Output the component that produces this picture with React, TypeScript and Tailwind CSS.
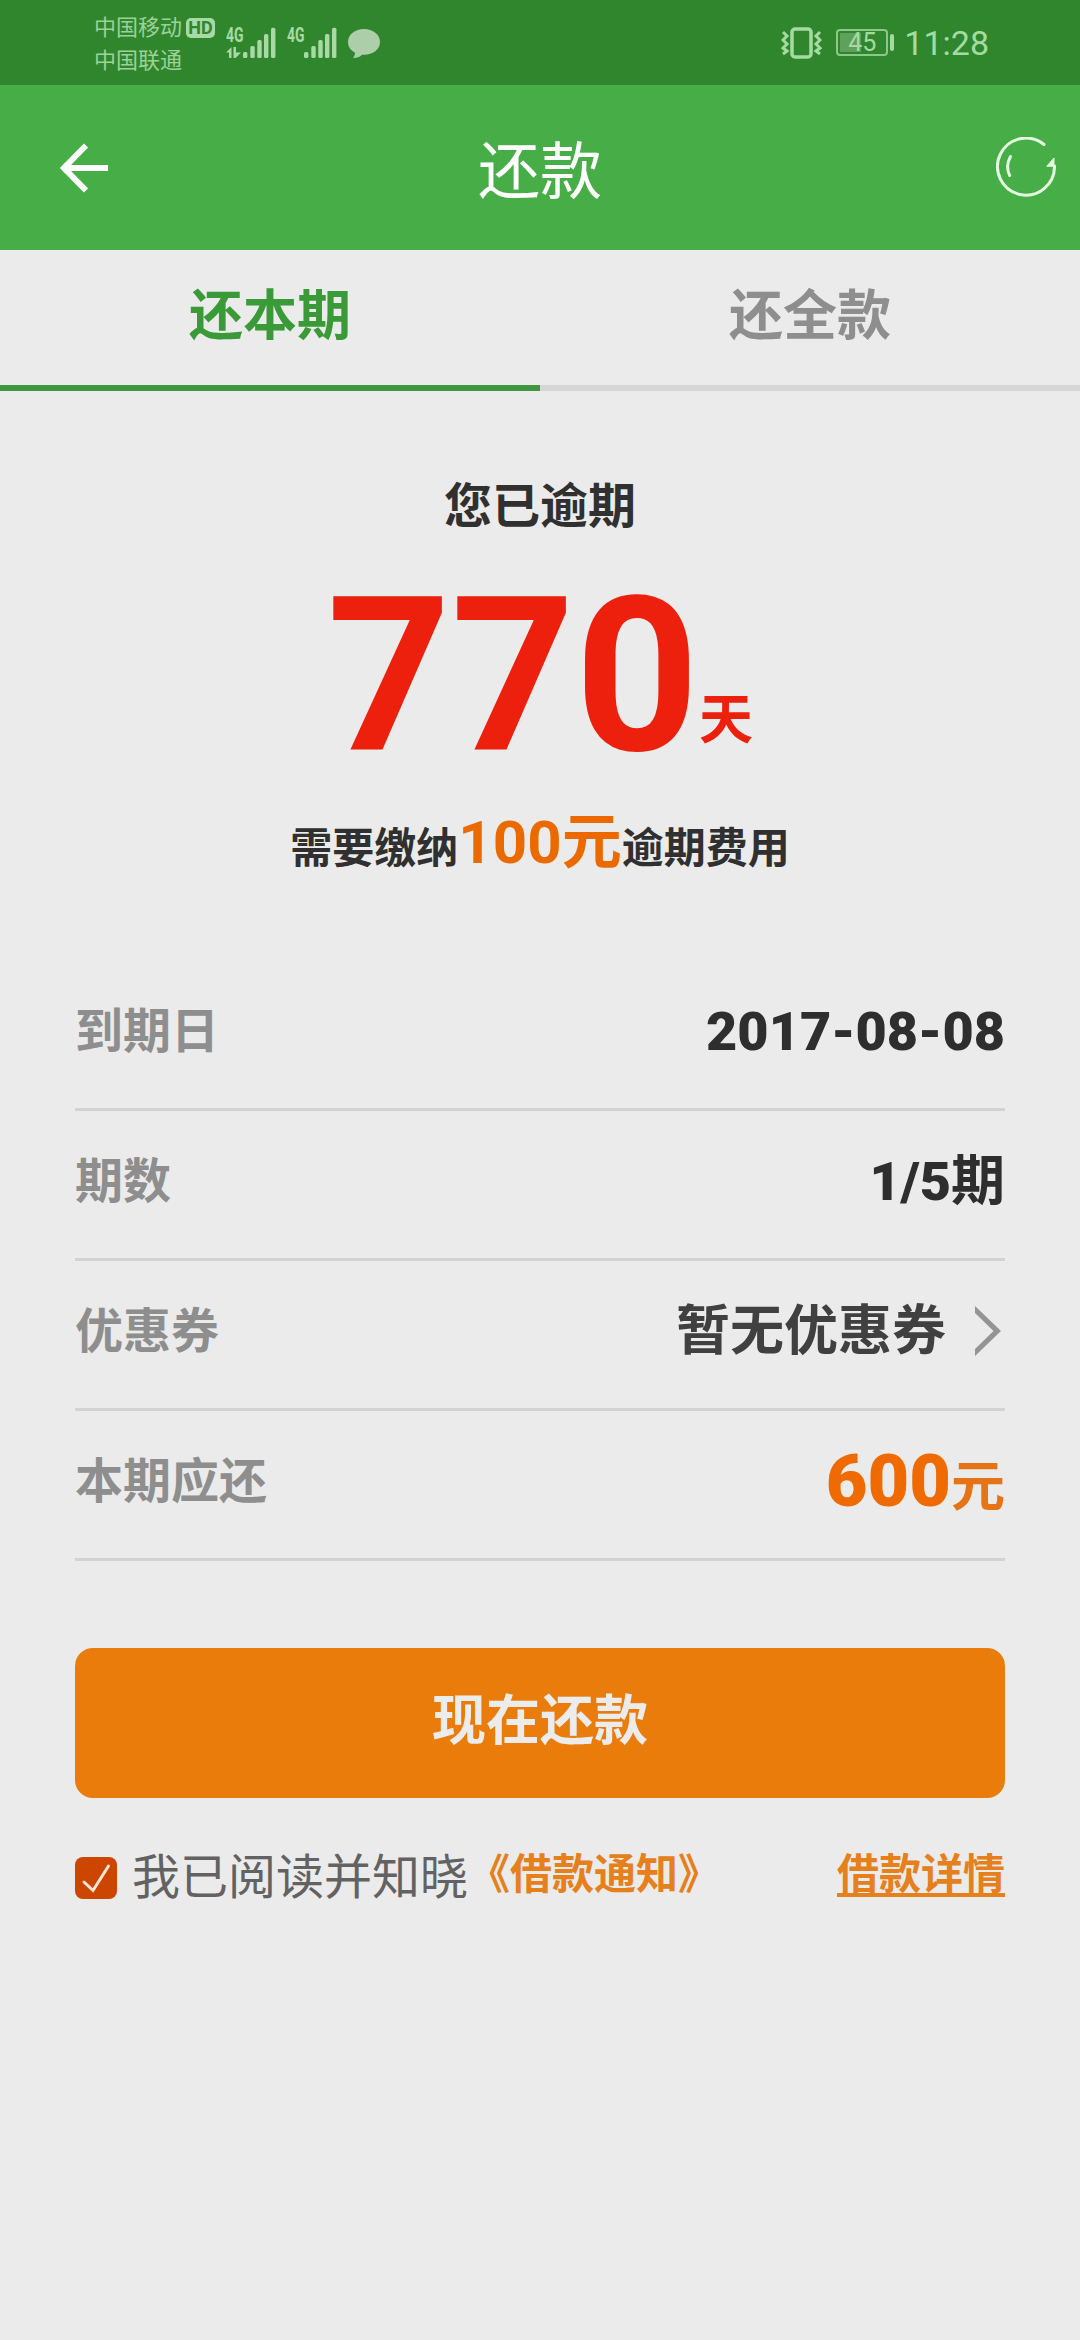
import React, { ReactNode } from 'react'

interface RowProps {
  label: string
  children: ReactNode
}

const Row: React.FC<RowProps> = ({ label, children }) => (
  <div className="flex h-[150px] items-center justify-between border-b-[3px] border-[#d2d2d2] pb-[6px]">
    <span className="text-[48px] leading-none font-bold text-[#8e8e8e]">{label}</span>
    {children}
  </div>
)

const SignalIcon = ({ data = false }: { data?: boolean }) => (
  <svg className="h-[44px] w-[50px]" viewBox="0 -6 50 44" fill="#a9d9a6">
    <text
      x="0"
      y="14.500"
      fontSize="20.500"
      fontWeight="700"
      fontFamily="Roboto"
      textLength="17.500"
      lengthAdjust="spacingAndGlyphs"
    >
      4G
    </text>
    {data && <path d="M0 25.500l5.500-5.500v11H3v-5.500zM7.500 20h2.500v5.500h5L9.500 31h-2z" />}
    <rect x="17" y="25" width="4.400" height="6" rx="1.500" />
    <rect x="24.300" y="19" width="4.400" height="12" rx="1.500" />
    <rect x="31.300" y="13" width="4.400" height="18" rx="1.500" />
    <rect x="38" y="7" width="4.400" height="24" rx="1.500" />
    <rect x="45" y="0.800" width="4.400" height="30.200" rx="1.500" />
  </svg>
)

const StatusBar = () => (
  <div className="flex h-[85px] items-center justify-between bg-[#2f862c] pr-[91px] pl-[94px] text-[#a5dba1]">
    <div className="flex items-center">
      <div className="w-[92px] pt-[2px] text-[22px] leading-[33px] font-normal text-[#9cd198]">
        <div>中国移动</div>
        <div>中国联通</div>
      </div>
      <div className="mb-[30px] flex h-[20px] w-[29px] items-center justify-center rounded-[5px] bg-[#a9d9a6] text-[18px] leading-[20px] font-bold text-[#2f862c]">
        HD
      </div>
      <div className="ml-[11px] flex items-center gap-[11px]">
        <SignalIcon data />
        <SignalIcon />
        <svg className="h-[32px] w-[32px]" viewBox="0 0 32 32" fill="#accfa9">
          <path d="M16 2C7 2 0 7.500 0 15c0 5 3 8.500 7 10.700 0 2-.8 3.800-2 5.300 4 0 7-1.200 9-3.300 10 .8 18-4.700 18-12.700C32 7.500 25 2 16 2z" />
        </svg>
      </div>
    </div>
    <div className="flex items-center">
      <svg className="h-[34px] w-[41px]" viewBox="0 0 41 34" fill="none" stroke="#a5dba1" strokeWidth="3">
        <rect x="11" y="3" width="19" height="28" rx="3" strokeWidth="3.500" />
        <path d="M2 6l4 4-4 4 4 4-4 4 4 3-4 3M39 6l-4 4 4 4-4 4 4 4-4 3 4 3" />
      </svg>
      <div className="ml-[14px] flex items-center gap-[2px]">
        <div className="relative flex h-[27px] w-[52px] items-center justify-center rounded-[4px] border-2 border-[#8cc889]">
          <div className="absolute top-[2px] left-[2px] h-[19px] w-[21px] bg-[#5fa15c]" />
          <span className="relative text-[25px] leading-none">45</span>
        </div>
        <div className="h-[17px] w-[4px] rounded-[2px] bg-[#a5dba1]" />
      </div>
      <span className="ml-[10px] text-[34px] leading-none">11:28</span>
    </div>
  </div>
)

const Header = () => (
  <header className="grid h-[165px] grid-cols-3 items-center bg-[#47ae47] pr-[24px] pl-[60px]">
    <svg className="h-[50px] w-[50px]" viewBox="0 0 50 50" fill="none" stroke="#fff" strokeWidth="6">
      <path d="M48 25H4M26 2.500L4 25l22 22.500" />
    </svg>
    <h1 className="-ml-[36px] pt-[10px] text-center text-[62px] leading-none font-normal text-white">还款</h1>
    <svg
      className="mb-[2px] h-[60px] w-[60px] justify-self-end"
      viewBox="0 0 60 60"
      fill="none"
      stroke="#e4fbe2"
      strokeWidth="3"
      strokeLinecap="round"
    >
      <path d="M48 7.500A28.500 28.500 0 1 0 58.500 29" />
      <path d="M14.500 19.500q-5.500 10-.8 19" />
      <path d="M51 29l7-8v8z" fill="#e4fbe2" strokeWidth="1" />
    </svg>
  </header>
)

export default function App() {
  return (
    <div className="min-h-[2340px] w-[1080px] bg-[#ebebeb] font-['Roboto','Noto_Sans_CJK_SC',sans-serif]">
      <StatusBar />
      <Header />

      <div className="grid h-[141px] grid-cols-2 text-center text-[54px] leading-[133px] font-bold">
        <div className="border-b-[6px] border-[#3f963d] text-[#3a9a38]">还本期</div>
        <div className="border-b-[6px] border-[#d6d6d6] text-[#8e8e8e]">还全款</div>
      </div>

      <section className="pt-[86px] text-center font-bold text-[#303030]">
        <p className="text-[48px] leading-[60px]">您已逾期</p>
        <p className="mt-[32px] text-[216px] leading-[216px] text-[#ed200d]">
          770<span className="align-[11px] text-[54px] leading-none">天</span>
        </p>
        <p className="mt-[24px] text-[42px] leading-[80px]">
          需要缴纳<span className="text-[60px] leading-none text-[#eb6a00]">100元</span>逾期费用
        </p>
      </section>

      <main className="mt-[72px] px-[75px]">
        <Row label="到期日">
          <span className="text-[54px] leading-none font-black text-[#2e2e2e]">2017-08-08</span>
        </Row>
        <Row label="期数">
          <span className="text-[54px] leading-none font-black text-[#2e2e2e]">
            1/5<span className="font-bold">期</span>
          </span>
        </Row>
        <Row label="优惠券">
          <span className="flex items-center gap-[29px] text-[54px] leading-none font-bold text-[#404040]">
            暂无优惠券
            <svg className="mr-[4px] mb-[2px] h-[50px] w-[26px]" viewBox="0 0 26 50" fill="#949494">
              <path d="M0 0l26 25L0 50v-7l18.500-18L0 7z" />
            </svg>
          </span>
        </Row>
        <Row label="本期应还">
          <span className="text-[72px] leading-none font-black text-[#ef6a00]">
            600<span className="text-[54px] font-bold text-[#e57417]">元</span>
          </span>
        </Row>

        <button className="mt-[87px] block h-[150px] w-full rounded-[18px] bg-[#e97c0a] pb-[2px] text-[54px] leading-none font-bold text-[#ececec]">
          现在还款
        </button>

        <div className="mt-[50px] flex h-[60px] items-center leading-none">
          <div className="flex size-[42px] items-center justify-center rounded-[8px] bg-[#cc4600]">
            <svg className="h-[30px] w-[30px]" viewBox="0 0 30 30" fill="none" stroke="#fbe6d8" strokeWidth="3" strokeLinecap="round">
              <path d="M3 19l9 8.500L27.500 3" />
            </svg>
          </div>
          <span className="ml-[15px] pb-px text-[48px] font-normal text-[#626262]">我已阅读并知晓</span>
          <a className="pb-[6px] text-[42px] font-bold text-[#e5801c]">《借款通知》</a>
          <a className="ml-auto pb-[6px] text-[42px] font-bold text-[#e5801c] underline decoration-4 underline-offset-[4px] [text-decoration-skip-ink:none]">
            借款详情
          </a>
        </div>
      </main>
    </div>
  )
}
